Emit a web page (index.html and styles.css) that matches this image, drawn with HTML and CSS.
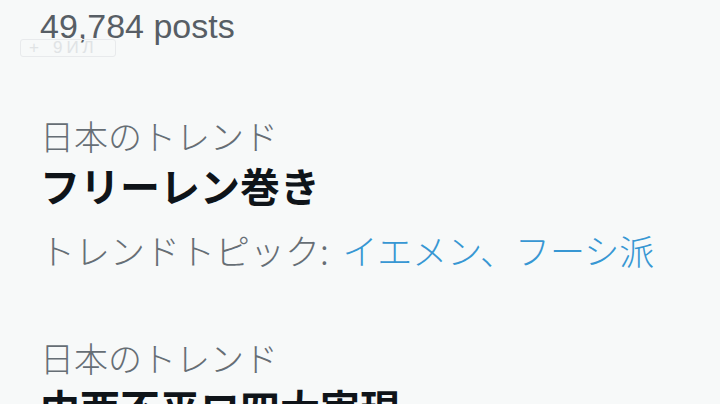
FILE: index.html
```html
<!DOCTYPE html>
<html lang="ja">
<head>
<meta charset="utf-8">
<link rel="stylesheet" href="styles.css">
</head>
<body>
<div class="panel">
  <div class="posts">49,784 posts</div>
  <div class="trend">
    <div class="meta">日本のトレンド</div>
    <div class="title">フリーレン巻き</div>
    <div class="topic">トレンドトピック: <span class="link">イエメン、フーシ派</span></div>
  </div>
  <div class="trend">
    <div class="meta">日本のトレンド</div>
    <div class="title">中西不平ロ四大実現</div>
  </div>
  <div class="watermark"><span class="wm-plus">+</span><span class="wm-text">9ИЛ</span></div>
</div>
</body>
</html>
```
FILE: styles.css
```css
html, body {
  margin: 0;
  padding: 0;
  background: #f7f9f9;
  overflow: hidden;
}
.panel {
  position: relative;
  width: 720px;
  height: 404px;
  overflow: hidden;
  padding-left: 40px;
  box-sizing: border-box;
  font-family: "Liberation Sans", "Noto Sans CJK JP", sans-serif;
}
.posts {
  padding-top: 5px;
  font-size: 34px;
  line-height: 42px;
  color: #575e65;
}
.trend {
  display: flex;
  flex-direction: column;
}
.posts + .trend {
  margin-top: 66px;
}
.trend + .trend {
  margin-top: 62px;
}
.meta, .title, .topic {
  font-family: "Noto Sans CJK JP", sans-serif;
  white-space: nowrap;
}
.meta {
  font-size: 34px;
  line-height: 46px;
  font-weight: 300;
  color: #666e75;
}
.title {
  font-size: 40px;
  line-height: 52px;
  font-weight: 700;
  color: #0f1419;
}
.topic {
  margin-top: 16px;
  font-size: 35px;
  line-height: 46px;
  font-weight: 300;
  color: #666e75;
}
.link {
  margin-left: 6px;
  color: #3797d3;
}
.watermark {
  position: absolute;
  left: 20px;
  top: 39px;
  display: flex;
  align-items: center;
  gap: 10px;
  padding: 0 8px;
  width: 96px;
  height: 18px;
  box-sizing: border-box;
  border: 1px solid #e8eaec;
  border-radius: 3px;
  color: #e0e3e5;
  font-size: 17px;
  line-height: 18px;
  letter-spacing: 4px;
  font-family: "Liberation Sans", sans-serif;
}
```
